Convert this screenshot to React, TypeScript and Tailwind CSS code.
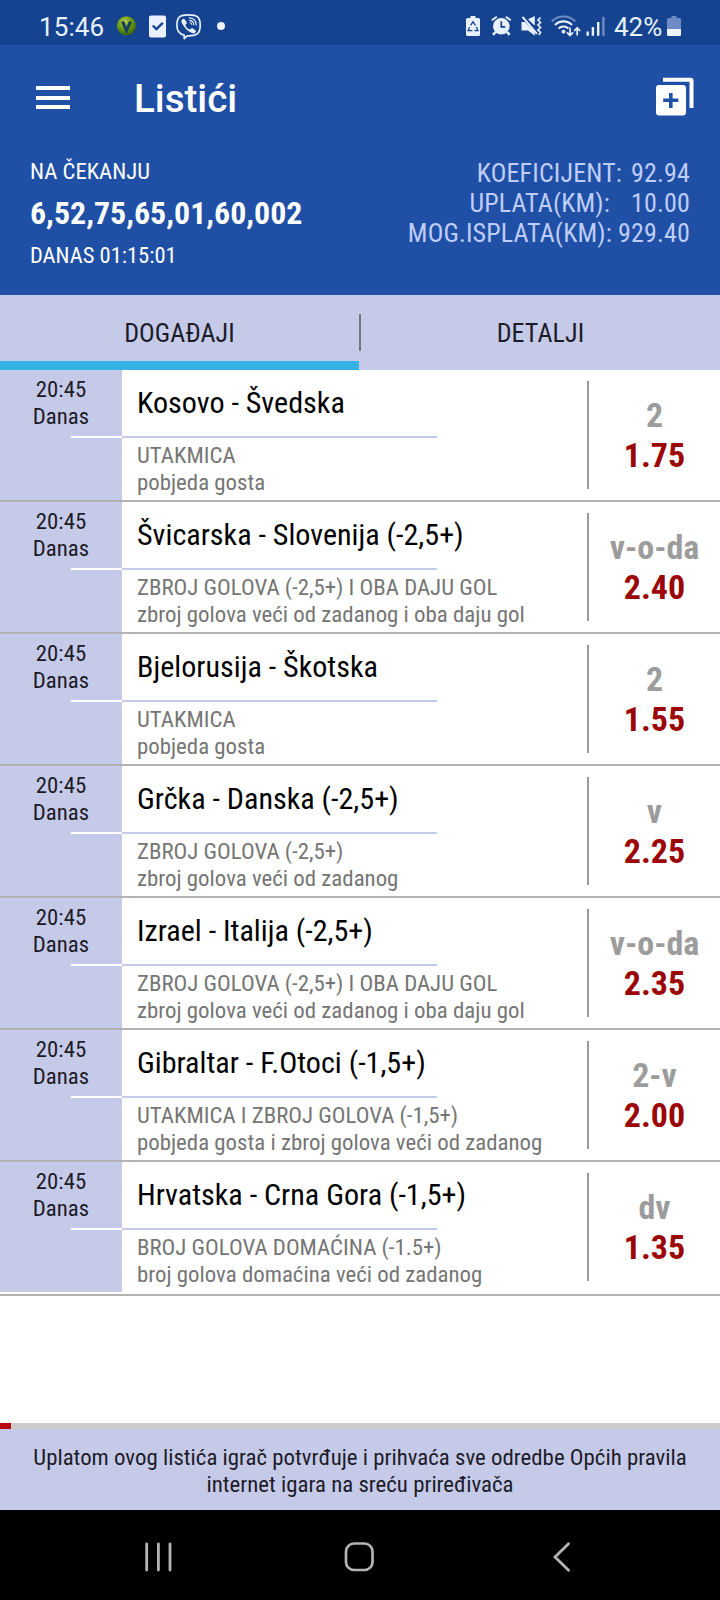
import React, { useState } from 'react';

interface Pick {
    id: number;
    time: string;
    day: string;
    match: string;
    market: string;
    description: string;
    tip: string;
    odds: string;
}

const picks: Pick[] = [
    { id: 1, time: '20:45', day: 'Danas', match: 'Kosovo - Švedska', market: 'UTAKMICA', description: 'pobjeda gosta', tip: '2', odds: '1.75' },
    { id: 2, time: '20:45', day: 'Danas', match: 'Švicarska - Slovenija (-2,5+)', market: 'ZBROJ GOLOVA (-2,5+) I OBA DAJU GOL', description: 'zbroj golova veći od zadanog i oba daju gol', tip: 'v-o-da', odds: '2.40' },
    { id: 3, time: '20:45', day: 'Danas', match: 'Bjelorusija - Škotska', market: 'UTAKMICA', description: 'pobjeda gosta', tip: '2', odds: '1.55' },
    { id: 4, time: '20:45', day: 'Danas', match: 'Grčka - Danska (-2,5+)', market: 'ZBROJ GOLOVA (-2,5+)', description: 'zbroj golova veći od zadanog', tip: 'v', odds: '2.25' },
    { id: 5, time: '20:45', day: 'Danas', match: 'Izrael - Italija (-2,5+)', market: 'ZBROJ GOLOVA (-2,5+) I OBA DAJU GOL', description: 'zbroj golova veći od zadanog i oba daju gol', tip: 'v-o-da', odds: '2.35' },
    { id: 6, time: '20:45', day: 'Danas', match: 'Gibraltar - F.Otoci (-1,5+)', market: 'UTAKMICA I ZBROJ GOLOVA (-1,5+)', description: 'pobjeda gosta i zbroj golova veći od zadanog', tip: '2-v', odds: '2.00' },
    { id: 7, time: '20:45', day: 'Danas', match: 'Hrvatska - Crna Gora (-1,5+)', market: 'BROJ GOLOVA DOMAĆINA (-1.5+)', description: 'broj golova domaćina veći od zadanog', tip: 'dv', odds: '1.35' },
];

const StatusBar = () => (
    <div className="h-[45px] bg-[#15438f] flex items-start pt-3 pl-[39px] pr-[38px] font-[Roboto] font-stretch-normal text-[#e8f1ff]">
        <span className="w-[78px] text-[26px] leading-[30px] tracking-[0.100px]">15:46</span>
        <svg className="w-5 h-7" viewBox="117 12 20 28">
            <defs>
                <radialGradient id="ball" cx="0.4" cy="0.3" r="0.75">
                    <stop offset="0" stopColor="#b5cc52" />
                    <stop offset="0.5" stopColor="#6a9a10" />
                    <stop offset="1" stopColor="#2d5c10" />
                </radialGradient>
            </defs>
            <circle cx="126.5" cy="25.8" r="9.6" fill="url(#ball)" />
            <path d="M122.5 21.5l4 9 4-9" fill="none" stroke="#173d5c" strokeWidth="3" />
        </svg>
        <svg className="w-[18px] h-7 ml-3" viewBox="149 12 18 28">
            <rect x="149" y="15.5" width="17" height="22" rx="2" fill="#eaf1ff" />
            <path d="M152.8 25.5l3.6 3.6 6.4-6.2" fill="none" stroke="#15438f" strokeWidth="2.4" />
        </svg>
        <svg className="w-[26px] h-7 ml-[9px]" viewBox="176 12 26 28" fill="none" stroke="#e8f1ff" strokeWidth="1.7" strokeLinecap="round" strokeLinejoin="round">
            <path d="M188.500 14.800c8.500 0 11.700 2.200 11.700 10.500s-3.200 10.600-11.500 10.600h-1.500l-3 2.600v-3.300c-5.300-1.100-7.300-4-7.300-9.900 0-8.300 3.200-10.500 11.600-10.500z" />
            <path d="M182.600 19.200c1-.7 1.800-.3 2.500.7l1.500 2.300c.4.700.2 1.300-.5 1.900-.6.500-.7.900-.4 1.600.7 1.700 1.900 2.900 3.600 3.600.7.300 1.100.1 1.600-.5.600-.7 1.100-.9 1.900-.4l2.200 1.500c.9.700 1.200 1.400.5 2.300-.9 1.300-2.100 1.600-3.500.9-4.600-2.200-8-5.600-10.300-10.400-.6-1.300-.3-2.600.9-3.500z" fill="#e8f1ff" stroke="none" />
            <path d="M189.300 17.900c4.200.3 6.800 2.700 7 7.100M189.700 20.400c2.700.3 4 1.700 4.200 4.400M190.100 22.800c1.100.1 1.600.7 1.700 1.700" strokeWidth="1.100" />
        </svg>
        <span className="w-2 h-2 ml-[15px] mt-[10px] rounded-full bg-[#eef4ff]"></span>
        <div className="ml-auto flex items-start">
            <svg className="w-[15px] h-7" viewBox="466 12 15 28">
                <path d="M470.500 16h5v2h3a1.500 1.500 0 011.500 1.500v15a1.500 1.500 0 01-1.500 1.500h-11a1.500 1.500 0 01-1.500-1.500v-15a1.500 1.500 0 011.500-1.500h3z" fill="#e8f1ff" />
                <path d="M470.600 25.300l2.400-3.600 2.400 3.600M476.300 27l1.600 3.700h-3.400M472.400 30.700h-4.300l1.500-3.500" fill="none" stroke="#15438f" strokeWidth="1.300" />
            </svg>
            <svg className="w-[21px] h-7 ml-[10px]" viewBox="491 12 21 28" fill="none" stroke="#e8f1ff">
                <circle cx="501.300" cy="26.300" r="8.300" fill="#e8f1ff" stroke="none" />
                <path d="M491.800 20.300l5-3.600M510.800 20.300l-5-3.600" strokeWidth="1.900" />
                <path d="M495.500 32l-2.500 2.800M507.100 32l2.500 2.800" strokeWidth="2.600" />
                <path d="M501.300 21.300v5.500h4" stroke="#15438f" strokeWidth="1.700" />
            </svg>
            <svg className="w-[22px] h-7 ml-[9px]" viewBox="521 12 22 28" fill="none" stroke="#e8f1ff">
                <path d="M521.500 22h3.500l9.800 9.800v4l-6.800-5.300h-6.500zM528 19.200l6.800-3.200v9.800z" fill="#e8f1ff" stroke="none" />
                <path d="M522.500 16.800l14.500 17" strokeWidth="2" />
                <path d="M540.500 17.500l-2.500 2.500 2.500 2.500-2.500 2.500 2.500 2.500-2.500 2.500 2.500 2.500-1.500 2.500" strokeWidth="1.700" />
            </svg>
            <svg className="w-[30px] h-7 ml-2" viewBox="551 12 30 28" fill="none" stroke="#e8f1ff" strokeWidth="2.100">
                <path d="M551.700 21.500c6.300-6.600 17.300-6.600 23.600 0" stroke="#6c8cc3" />
                <path d="M555 25c4.700-4.800 12.300-4.800 17 0M558.600 28.500c2.800-2.700 7-2.700 9.800 0" />
                <circle cx="563.500" cy="31.700" r="1.900" fill="#e8f1ff" stroke="none" />
                <path d="M570 27.500v8M567 32.300l3 3.200 3-3.200M577.200 35.500v-8M574.200 31l3-3.200 3 3.200" strokeWidth="1.700" />
            </svg>
            <svg className="w-[19px] h-7 ml-[5px]" viewBox="586 12 19 28">
                <path d="M586.500 31.500h2.400v4.300h-2.400zM591.700 27h2.400v8.800h-2.400zM597 22h2.400v13.800H597z" fill="#e8f1ff" />
                <path d="M602.200 16.800h2.400v19h-2.400z" fill="#6c8cc3" />
            </svg>
            <span className="w-[53px] pl-[9px] text-[26px] leading-[30px]">42%</span>
            <svg className="w-[15px] h-7 ml-[9px]" viewBox="667 12 15 28">
                <path d="M671.500 16h5v2h3a1.500 1.500 0 011.500 1.500v9.500h-14v-9.500a1.500 1.500 0 011.500-1.500h3z" fill="#6c8cc3" />
                <path d="M667 29h14v5.500a1.500 1.500 0 01-1.500 1.500h-11a1.500 1.500 0 01-1.500-1.500z" fill="#eef4ff" />
            </svg>
        </div>
    </div>
);

const Header = () => (
    <header className="h-[250px] bg-[#1f50a5] text-white">
        <div className="h-[107px] flex items-start pl-9 pr-[26px]">
            <button className="w-[34px] mt-[41px] flex flex-col gap-[5.500px]" aria-label="Meni">
                <span className="h-1 w-full bg-white"></span>
                <span className="h-1 w-full bg-white"></span>
                <span className="h-1 w-full bg-white"></span>
            </button>
            <h1 className="ml-[64px] mt-[31px] font-[Roboto] font-stretch-normal font-medium text-[38.600px] leading-[46px]">Listići</h1>
            <svg className="ml-auto mt-[32px] w-[39px] h-10" viewBox="655 77 39 40">
                <path d="M663 77.700h27.500a3 3 0 013 3V108h-4V81.700H663z" fill="white" />
                <path fillRule="evenodd" d="M659 85h24a3 3 0 013 3v24.500a3 3 0 01-3 3h-24a3 3 0 01-3-3V88a3 3 0 013-3zm10 8v5.500h-5.800v3.600h5.800v6h3.600v-6h5.700v-3.600h-5.700V93z" fill="white" />
            </svg>
        </div>
        <div className="flex justify-between pl-[30px] pr-[30px]">
            <div className="pt-[6px]">
                <p className="text-[22.700px] leading-[28px]">NA ČEKANJU</p>
                <p className="mt-[7px] text-[31.900px] leading-[40px] font-bold">6,52,75,65,01,60,002</p>
                <p className="mt-[8px] text-[22.500px] leading-[28px]">DANAS 01:15:01</p>
            </div>
            <div className="pt-[6px] text-[26px] leading-[30px] tracking-[0.150px] text-[#bfcdfa] text-right">
                <p>KOEFICIJENT:<span className="ml-[9px]">92.94</span></p>
                <p>UPLATA(KM):<span className="ml-[21px]">10.00</span></p>
                <p>MOG.ISPLATA(KM): 929.40</p>
            </div>
        </div>
    </header>
);

const PickRow: React.FC<{ pick: Pick }> = ({ pick }) => (
    <li className="h-[132px] border-b-2 border-[#b3b3b3] flex last:h-[134px] last:pb-[2px]">
        <div className="w-[122px] bg-[#c6cae9] pt-[6px] text-center text-[22.800px] leading-[27px] text-[#1c1c28]">
            <p>{pick.time}</p>
            <p>{pick.day}</p>
            <div className="mt-[6px] ml-[71px] h-[2px] bg-white"></div>
        </div>
        <div className="w-[465px]">
            <h2 className="h-[66px] pl-[15px] pt-[15px] text-[30.100px] leading-[36px] text-black whitespace-nowrap">{pick.match}</h2>
            <div className="w-[315px] h-[2px] bg-[#c6cae9]"></div>
            <div className="pl-[15px] pt-[4px] text-[22.850px] leading-[27px] text-[#757575] whitespace-nowrap">
                <p>{pick.market}</p>
                <p>{pick.description}</p>
            </div>
        </div>
        <div className="my-[11px] w-[2px] h-[108px] bg-[#9c9c9c]"></div>
        <div className="flex-1 pt-[25px] text-center text-[34px] leading-[40px] font-bold">
            <p className="text-[#9c9c9c]">{pick.tip}</p>
            <p className="text-[#9c0505]">{pick.odds}</p>
        </div>
    </li>
);

const NavBar = () => (
    <nav className="h-[90px] pt-[4px] bg-black flex justify-between items-center pl-[143px] pr-[148px]">
        <svg className="w-[30px] h-[32px]" viewBox="0 0 30 32" fill="none" stroke="#b4b4b4" strokeWidth="2.800" strokeLinecap="round">
            <path d="M3.700 3v26M15.400 3v26M27 3v26" />
        </svg>
        <svg className="w-[32px] h-[32px] mr-[8px]" viewBox="0 0 32 32" fill="none" stroke="#b4b4b4" strokeWidth="2.700">
            <rect x="3" y="2.500" width="26.500" height="26.500" rx="8" />
        </svg>
        <svg className="w-[20px] h-[32px]" viewBox="0 0 20 32" fill="none" stroke="#b4b4b4" strokeWidth="2.800" strokeLinecap="round">
            <path d="M16.500 2.700L3 16 16.500 29.300" />
        </svg>
    </nav>
);

const App = () => {
    const [tab, setTab] = useState<'events' | 'details'>('events');

    return (
        <div className="w-[720px] h-[1600px] flex flex-col bg-white font-['Roboto_Condensed',Roboto,sans-serif] font-stretch-condensed overflow-hidden">
            <StatusBar />
            <Header />
            <div className="h-[75px] bg-[#c6cae9] flex items-start text-[26px] tracking-[0.100px] text-[#1c1c28]">
                <button onClick={() => setTab('events')} className={`w-[359px] h-full border-b-[9px] ${tab === 'events' ? 'border-[#35b3e6]' : 'border-transparent'}`}>
                    <span className="block pt-[10px]">DOGAĐAJI</span>
                </button>
                <div className="w-[2px] h-[37px] mt-[19px] bg-[#75757d]"></div>
                <button onClick={() => setTab('details')} className={`flex-1 h-full border-b-[9px] ${tab === 'details' ? 'border-[#35b3e6]' : 'border-transparent'}`}>
                    <span className="block pt-[10px]">DETALJI</span>
                </button>
            </div>
            <ul>
                {picks.map(pick => <PickRow key={pick.id} pick={pick} />)}
            </ul>
            <div className="mt-auto h-[6px] bg-[#cbcbcb]">
                <div className="w-[11px] h-full bg-[#b90510]"></div>
            </div>
            <footer className="h-[81px] bg-[#c6cae9] pt-[15px] text-center text-[22.850px] leading-[27px] text-[#1c1c28]">
                <p>Uplatom ovog listića igrač potvrđuje i prihvaća sve odredbe Općih pravila</p>
                <p>internet igara na sreću priređivača</p>
            </footer>
            <NavBar />
        </div>
    );
};

export default App;
